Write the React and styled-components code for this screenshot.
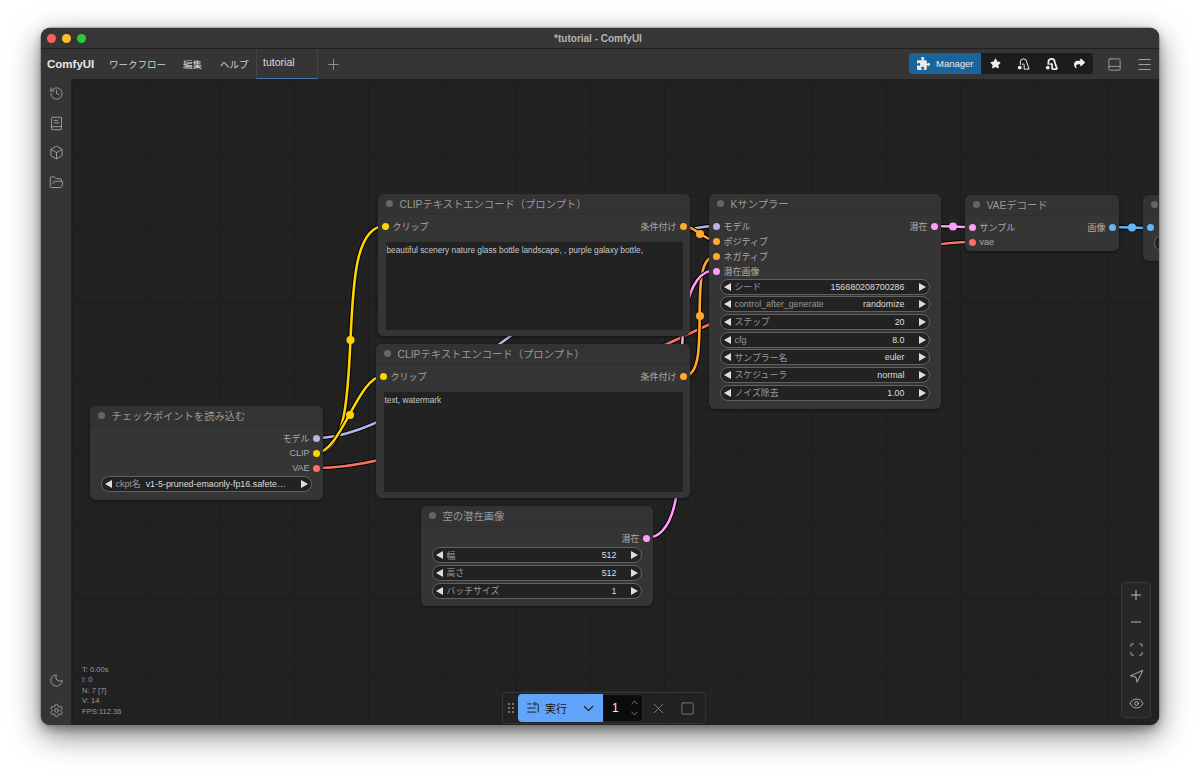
import styled, { createGlobalStyle } from "styled-components";
import {
  BookText,
  Box,
  ChevronDown,
  ChevronUp,
  FolderOpen,
  Eye,
  History,
  ListStart,
  Menu,
  Minus,
  Moon,
  Navigation,
  PanelBottom,
  Plus,
  Scan,
  Settings,
  Square,
  X,
} from "lucide-react";
import { FaPuzzlePiece, FaShare, FaStar } from "react-icons/fa6";

const GlobalStyle = createGlobalStyle`
  html, body {
    margin: 0;
    padding: 0;
    background: #fff;
    font-family: "Liberation Sans", "Noto Sans CJK JP", sans-serif;
  }
  * { box-sizing: border-box; }
`;

const Page = styled.div`
  width: 1200px;
  height: 780px;
  padding: 28px 41px 55px;
  overflow: hidden;
`;

const Window = styled.div`
  height: 100%;
  display: flex;
  flex-direction: column;
  border-radius: 9px;
  overflow: hidden;
  background: #353535;
  box-shadow: 0 0 0 0.5px #7a7a7a, 0 4px 10px rgba(0, 0, 0, 0.3), 0 10px 30px rgba(0, 0, 0, 0.5);
`;

const TitleBar = styled.div`
  position: relative;
  flex: 0 0 21px;
  display: flex;
  align-items: center;
  justify-content: center;
  padding-right: 4px;
  background: #363636;
  border-bottom: 1px solid #202020;
  color: #b4b4b4;
  font-size: 10px;
  font-weight: bold;
`;

const Lights = styled.div`
  position: absolute;
  left: 6px;
  top: 6px;
  display: flex;
  gap: 6px;
`;

const Light = styled.span`
  width: 9px;
  height: 9px;
  border-radius: 50%;
  background: ${(p) => p.$color};
`;

const MenuBar = styled.div`
  flex: 0 0 30px;
  display: flex;
  align-items: stretch;
  padding-left: 6px;
  background: #353535;
  color: #d4d4d4;
`;

const Logo = styled.div`
  display: flex;
  align-items: center;
  width: 62px;
  font-size: 11.5px;
  font-weight: bold;
  color: #e8e8e8;
`;

const MenuItem = styled.div`
  display: flex;
  align-items: center;
  margin-right: ${(p) => p.$gap}px;
  font-size: 9.5px;
`;

const Tab = styled.div`
  width: 62px;
  margin-left: -1px;
  padding: 7px 0 0 6.5px;
  border-left: 1px solid #444;
  border-right: 1px solid #444;
  border-bottom: 1px solid #4a78a8;
  font-size: 10.5px;
  color: #ddd;
`;

const AddTab = styled.div`
  display: flex;
  align-items: center;
  margin-left: 7px;
  color: #999;
`;

const Spacer = styled.div`
  flex: 1;
`;

const ActionGroup = styled.div`
  align-self: center;
  display: flex;
  align-items: center;
  height: 21px;
  width: 184px;
  margin-bottom: 1px;
  border-radius: 3px;
  background: #1c1c1c;
  color: #eee;
`;

const ManagerButton = styled.div`
  display: flex;
  align-items: center;
  gap: 6px;
  width: 72px;
  height: 100%;
  padding-left: 8px;
  border-radius: 3px 0 0 3px;
  background: #1b6499;
  font-size: 9.5px;
  color: #eaeaea;
`;

const ActionIcon = styled.div`
  flex: 0 0 28px;
  display: flex;
  align-items: center;
  justify-content: center;
`;

const BarIcon = styled.div`
  align-self: center;
  display: flex;
  justify-content: center;
  width: 30px;
  margin-left: ${(p) => p.$gap || 0}px;
  color: #a0a0a0;
`;

const Main = styled.div`
  flex: 1;
  min-height: 0;
  display: flex;
`;

const Sidebar = styled.div`
  flex: 0 0 30px;
  display: flex;
  flex-direction: column;
  justify-content: space-between;
  background: #353535;
  color: #a8a8a8;
`;

const SideGroup = styled.div`
  display: flex;
  flex-direction: column;
`;

const SideIcon = styled.div`
  height: 29.6px;
  display: flex;
  align-items: center;
  justify-content: center;
`;

const Canvas = styled.div`
  position: relative;
  flex: 1;
  overflow: hidden;
  background-color: #212121;
  background-image:
    linear-gradient(#1c1c1c 1px, transparent 1px),
    linear-gradient(90deg, #1c1c1c 1px, transparent 1px),
    linear-gradient(#252525 1px, transparent 1px),
    linear-gradient(90deg, #252525 1px, transparent 1px);
  background-size: 74px 74px, 74px 74px, 9.25px 9.25px, 9.25px 9.25px;
  background-position: 0 2px, 1px 0, 0 2px, 1px 0;
`;

const WireLayer = styled.svg`
  position: absolute;
  left: 0;
  top: 0;
  width: 1088px;
  height: 646px;
`;

const Node = styled.div`
  position: absolute;
  left: ${(p) => p.$x}px;
  top: ${(p) => p.$y}px;
  width: ${(p) => p.$w}px;
  height: ${(p) => p.$h}px;
  display: flex;
  flex-direction: column;
  overflow: hidden;
  border-radius: 6px;
  background: #353535;
  box-shadow: 0 1px 3px rgba(0, 0, 0, 0.45);
`;

const NodeHeader = styled.div`
  flex: 0 0 21px;
  display: flex;
  align-items: center;
  gap: 7px;
  padding: 0 0 1px 7.5px;
  background: #333;
  border-bottom: 1px solid #2e2e2e;
  font-size: 10.3px;
  white-space: nowrap;
  color: #999;
`;

const NodeDot = styled.span`
  flex: 0 0 7px;
  height: 7px;
  border-radius: 50%;
  background: #666;
`;

const NodeBody = styled.div`
  display: flex;
  flex-direction: column;
  padding-top: 3.5px;
`;

const SlotRow = styled.div`
  height: 15px;
  display: flex;
  align-items: center;
  justify-content: space-between;
  padding: 0 3.5px;
`;

const Slot = styled.div`
  display: flex;
  align-items: center;
  gap: ${(p) => p.$gap}px;
  font-size: 9px;
  white-space: nowrap;
  color: #aaa;
`;

const SlotDot = styled.span`
  width: 7px;
  height: 7px;
  border-radius: 50%;
  background: ${(p) => p.$color};
`;

const PromptBox = styled.div`
  height: ${(p) => p.$h}px;
  margin: 8.5px 7px 0 8px;
  padding: 3px 0.5px;
  background: #222;
  font-size: 8.3px;
  line-height: 11px;
  color: #c8c8c8;
`;

const Pill = styled.div`
  height: 16px;
  margin: ${(p) => (p.$first ? 0 : 1.7)}px 11px 0;
  display: flex;
  align-items: center;
  padding: 0 3.5px 0 3px;
  border-radius: 8px;
  border: 1px solid #616161;
  background: #222;
  font-size: 8.9px;
  white-space: nowrap;
  color: #999;
`;

const PillArrow = styled.span`
  flex: 0 0 auto;
  width: 0;
  height: 0;
  border-top: 4px solid transparent;
  border-bottom: 4px solid transparent;
  ${(p) => (p.$right ? "border-left: 7.5px solid #ddd;" : "border-right: 7.5px solid #ddd;")}
`;

const PillLabel = styled.span`
  margin-left: 3.5px;
  flex: ${(p) => (p.$tight ? "0 0 auto" : "1")};
`;

const PillValue = styled.span`
  flex: ${(p) => (p.$grow ? "1" : "0 0 auto")};
  margin-left: ${(p) => (p.$grow ? 5 : 0)}px;
  margin-right: ${(p) => (p.$grow ? 10 : 14)}px;
  color: #ddd;
`;

const CutPill = styled(Pill)`
  margin-left: 11px;
  width: 120px;
`;

const Stats = styled.div`
  position: absolute;
  left: 11px;
  bottom: 8px;
  font-size: 7.6px;
  line-height: 10.4px;
  color: #9a9a9a;
`;

const RunBar = styled.div`
  position: absolute;
  left: 431px;
  top: 613px;
  width: 204px;
  height: 32px;
  display: flex;
  align-items: center;
  border: 1px solid #353535;
  border-radius: 4px;
  background: #222;
`;

const Grip = styled.div`
  flex: 0 0 15px;
  display: flex;
  justify-content: center;
  color: #999;
`;

const RunButton = styled.div`
  display: flex;
  align-items: center;
  width: 85px;
  height: 28px;
  padding: 0 6px 0 8px;
  border-radius: 4px 0 0 4px;
  background: #60a5fa;
  color: #1a1a1a;
  font-size: 11px;
`;

const RunLabel = styled.span`
  flex: 1;
  margin-left: 5px;
`;

const Count = styled.div`
  display: flex;
  align-items: center;
  justify-content: space-between;
  width: 40px;
  height: 28px;
  padding: 0 2px 0 9px;
  border: 1px solid #2a2a2a;
  border-left: 0;
  border-radius: 0 4px 4px 0;
  background: #0b0c0e;
  font-size: 12px;
  color: #eee;
`;

const Stepper = styled.div`
  display: flex;
  flex-direction: column;
  color: #999;
`;

const RunIcon = styled.div`
  flex: 0 0 29px;
  margin-left: ${(p) => p.$gap || 0}px;
  display: flex;
  justify-content: center;
  color: #7d7d7d;
`;

const ZoomPanel = styled.div`
  position: absolute;
  left: 1050px;
  top: 503px;
  width: 30px;
  height: 136px;
  display: grid;
  grid-auto-rows: 27px;
  justify-items: center;
  align-items: center;
  border: 1px solid #383838;
  border-radius: 4px;
  background-color: #272727;
  background-image: radial-gradient(#171717 0.5px, transparent 0.7px);
  background-size: 4px 4px;
  color: #c4c4c4;

  & > svg {
    margin-top: -3px;
  }
`;

// canvas origin sits at page (71, 79); node coordinates below are canvas based
const COLORS = {
  model: "#b7b4e6",
  clip: "#ffd500",
  cond: "#ffa931",
  latent: "#ff9cf9",
  vae: "#fa7264",
  image: "#64b5f6",
};

const WIRES = [
  { c: COLORS.model, d: "M245 359 C358 359 532 147 645 147" },
  { c: COLORS.vae, d: "M245 389 C418 389 727 163 900 163" },
  { c: COLORS.clip, d: "M245 374 C304 374 255 147 314 147", mid: [279.5, 261] },
  { c: COLORS.clip, d: "M245 374 C270 374 287 297 312 297", mid: [279, 336] },
  { c: COLORS.cond, d: "M613 147 C623 147 635 162 645 162", mid: [629, 155] },
  { c: COLORS.cond, d: "M613 297 C644 297 613 177 645 177", mid: [629, 237] },
  { c: COLORS.latent, d: "M575 459 C644 459 576 191 645 191", mid: [610, 325] },
  { c: COLORS.latent, d: "M864 147 C875 147 889 148 900 148", mid: [882, 147.5] },
  { c: COLORS.image, d: "M1042 148 C1052 148 1069 149 1079 149", mid: [1061, 148.5] },
];

const Wire = ({ c, d, mid }) => (
  <g>
    <path d={d} fill="none" stroke="#000" strokeWidth="4.6" />
    <path d={d} fill="none" stroke={c} strokeWidth="2.6" />
    {mid && <circle cx={mid[0]} cy={mid[1]} r="4" fill={c} />}
  </g>
);

const VacuumIcon = ({ heavy }) => (
  <svg width="15" height="15" viewBox="0 0 24 24" fill="none" stroke="currentColor" strokeWidth={heavy ? 2.8 : 1.6}>
    <path d="M7 14V9.5a5 5 0 0 1 10 0L21 21" />
    <path d="M13 21h8" />
    <path d="M13 21v-7a1.5 1.5 0 0 0-3 0" />
    <circle cx="6" cy="18.5" r="3" fill="currentColor" stroke="none" />
  </svg>
);

const GripDots = () => (
  <svg width="6" height="10" viewBox="0 0 6 10" fill="currentColor">
    {[1, 5, 9].map((y) => (
      <g key={y}>
        <circle cx="1" cy={y} r="0.9" />
        <circle cx="5" cy={y} r="0.9" />
      </g>
    ))}
  </svg>
);

const Widget = ({ label, value, first }) => (
  <Pill $first={first}>
    <PillArrow />
    <PillLabel>{label}</PillLabel>
    <PillValue>{value}</PillValue>
    <PillArrow $right />
  </Pill>
);

const Input = ({ color, children }) => (
  <Slot $gap={4}>
    <SlotDot $color={color} />
    {children}
  </Slot>
);

const Output = ({ color, children }) => (
  <Slot $gap={3}>
    {children}
    <SlotDot $color={color} />
  </Slot>
);

const Header = ({ children }) => (
  <NodeHeader>
    <NodeDot />
    {children}
  </NodeHeader>
);

const ClipNode = ({ x, y, w, h, boxH, text }) => (
  <Node $x={x} $y={y} $w={w} $h={h}>
    <Header>CLIPテキストエンコード（プロンプト）</Header>
    <NodeBody>
      <SlotRow>
        <Input color={COLORS.clip}>クリップ</Input>
        <Output color={COLORS.cond}>条件付け</Output>
      </SlotRow>
      <PromptBox $h={boxH}>{text}</PromptBox>
    </NodeBody>
  </Node>
);

const SAMPLER_WIDGETS = [
  ["シード", "156680208700286"],
  ["control_after_generate", "randomize"],
  ["ステップ", "20"],
  ["cfg", "8.0"],
  ["サンプラー名", "euler"],
  ["スケジューラ", "normal"],
  ["ノイズ除去", "1.00"],
];

const App = () => (
  <>
    <GlobalStyle />
    <Page>
      <Window>
        <TitleBar>
          <Lights>
            <Light $color="#ff5f57" />
            <Light $color="#febc2e" />
            <Light $color="#28c840" />
          </Lights>
          *tutorial - ComfyUI
        </TitleBar>
        <MenuBar>
          <Logo>ComfyUI</Logo>
          <MenuItem $gap={17}>ワークフロー</MenuItem>
          <MenuItem $gap={18}>編集</MenuItem>
          <MenuItem $gap={8}>ヘルプ</MenuItem>
          <Tab>tutorial</Tab>
          <AddTab>
            <Plus size={17} strokeWidth={1.2} />
          </AddTab>
          <Spacer />
          <ActionGroup>
            <ManagerButton>
              <FaPuzzlePiece size={13} />
              Manager
            </ManagerButton>
            <ActionIcon>
              <FaStar size={11} />
            </ActionIcon>
            <ActionIcon>
              <VacuumIcon />
            </ActionIcon>
            <ActionIcon>
              <VacuumIcon heavy />
            </ActionIcon>
            <ActionIcon>
              <FaShare size={11} />
            </ActionIcon>
          </ActionGroup>
          <BarIcon $gap={6}>
            <PanelBottom size={15} strokeWidth={1.5} />
          </BarIcon>
          <BarIcon>
            <Menu size={17} strokeWidth={1.5} />
          </BarIcon>
        </MenuBar>
        <Main>
          <Sidebar>
            <SideGroup>
              <SideIcon>
                <History size={15} strokeWidth={1.4} />
              </SideIcon>
              <SideIcon>
                <BookText size={15} strokeWidth={1.4} />
              </SideIcon>
              <SideIcon>
                <Box size={15} strokeWidth={1.4} />
              </SideIcon>
              <SideIcon>
                <FolderOpen size={15} strokeWidth={1.4} />
              </SideIcon>
            </SideGroup>
            <SideGroup>
              <SideIcon>
                <Moon size={15} strokeWidth={1.4} />
              </SideIcon>
              <SideIcon>
                <Settings size={15} strokeWidth={1.4} />
              </SideIcon>
            </SideGroup>
          </Sidebar>
          <Canvas>
            <WireLayer viewBox="0 0 1088 646">
              {WIRES.map((w) => (
                <Wire key={w.d} {...w} />
              ))}
            </WireLayer>

            <Node $x={19} $y={327} $w={233} $h={94}>
              <Header>チェックポイントを読み込む</Header>
              <NodeBody>
                <SlotRow>
                  <span />
                  <Output color={COLORS.model}>モデル</Output>
                </SlotRow>
                <SlotRow>
                  <span />
                  <Output color={COLORS.clip}>CLIP</Output>
                </SlotRow>
                <SlotRow>
                  <span />
                  <Output color={COLORS.vae}>VAE</Output>
                </SlotRow>
                <Pill $first>
                  <PillArrow />
                  <PillLabel $tight>ckpt名</PillLabel>
                  <PillValue $grow>v1-5-pruned-emaonly-fp16.safete…</PillValue>
                  <PillArrow $right />
                </Pill>
              </NodeBody>
            </Node>

            <ClipNode
              x={307}
              y={115}
              w={312}
              h={142}
              boxH={88}
              text="beautiful scenery nature glass bottle landscape, , purple galaxy bottle,"
            />
            <ClipNode x={305} y={265} w={314} h={154} boxH={100} text="text, watermark" />

            <Node $x={350} $y={427} $w={232} $h={100}>
              <Header>空の潜在画像</Header>
              <NodeBody>
                <SlotRow>
                  <span />
                  <Output color={COLORS.latent}>潜在</Output>
                </SlotRow>
                <Widget label="幅" value="512" />
                <Widget label="高さ" value="512" />
                <Widget label="バッチサイズ" value="1" />
              </NodeBody>
            </Node>

            <Node $x={638} $y={115} $w={232} $h={215}>
              <Header>Kサンプラー</Header>
              <NodeBody>
                <SlotRow>
                  <Input color={COLORS.model}>モデル</Input>
                  <Output color={COLORS.latent}>潜在</Output>
                </SlotRow>
                <SlotRow>
                  <Input color={COLORS.cond}>ポジティブ</Input>
                </SlotRow>
                <SlotRow>
                  <Input color={COLORS.cond}>ネガティブ</Input>
                </SlotRow>
                <SlotRow>
                  <Input color={COLORS.latent}>潜在画像</Input>
                </SlotRow>
                {SAMPLER_WIDGETS.map(([label, value], i) => (
                  <Widget key={label} label={label} value={value} first={i === 0} />
                ))}
              </NodeBody>
            </Node>

            <Node $x={894} $y={116} $w={154} $h={56}>
              <Header>VAEデコード</Header>
              <NodeBody>
                <SlotRow>
                  <Input color={COLORS.latent}>サンプル</Input>
                  <Output color={COLORS.image}>画像</Output>
                </SlotRow>
                <SlotRow>
                  <Input color={COLORS.vae}>vae</Input>
                </SlotRow>
              </NodeBody>
            </Node>

            <Node $x={1072} $y={116} $w={180} $h={66}>
              <Header />
              <NodeBody>
                <SlotRow>
                  <Input color={COLORS.image} />
                </SlotRow>
                <CutPill $first />
              </NodeBody>
            </Node>

            <Stats>
              T: 0.00s
              <br />
              I: 0
              <br />
              N: 7 [7]
              <br />
              V: 14
              <br />
              FPS:112.36
            </Stats>

            <RunBar>
              <Grip>
                <GripDots />
              </Grip>
              <RunButton>
                <ListStart size={14} strokeWidth={1.6} />
                <RunLabel>実行</RunLabel>
                <ChevronDown size={17} strokeWidth={1.8} />
              </RunButton>
              <Count>
                1
                <Stepper>
                  <ChevronUp size={11} strokeWidth={1.6} />
                  <ChevronDown size={11} strokeWidth={1.6} />
                </Stepper>
              </Count>
              <RunIcon $gap={1}>
                <X size={17} strokeWidth={1.4} />
              </RunIcon>
              <RunIcon>
                <Square size={15} strokeWidth={1.4} />
              </RunIcon>
            </RunBar>

            <ZoomPanel>
              <Plus size={16} strokeWidth={1.4} />
              <Minus size={16} strokeWidth={1.4} />
              <Scan size={15} strokeWidth={1.4} />
              <Navigation size={15} strokeWidth={1.4} />
              <Eye size={15} strokeWidth={1.4} />
            </ZoomPanel>
          </Canvas>
        </Main>
      </Window>
    </Page>
  </>
);

export default App;
